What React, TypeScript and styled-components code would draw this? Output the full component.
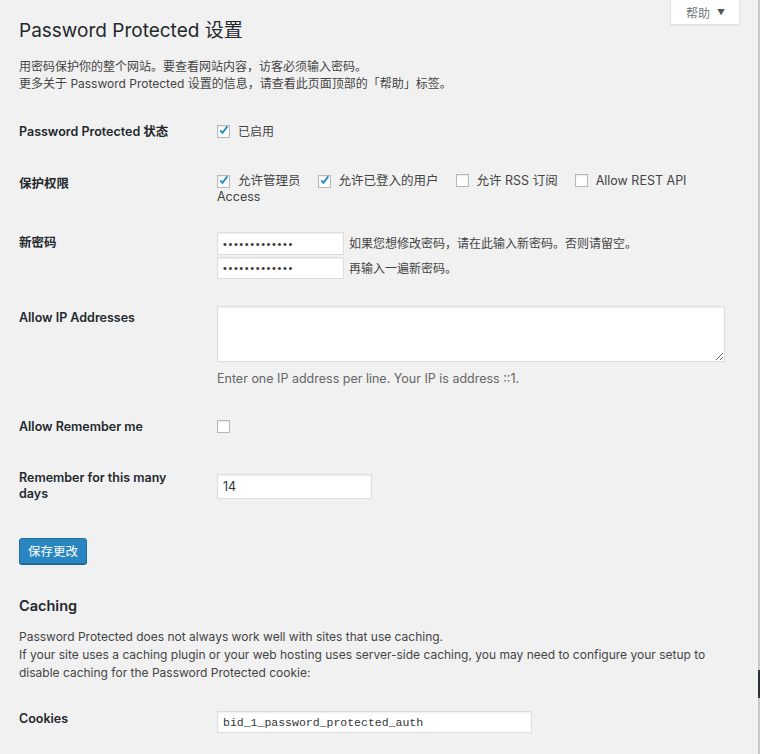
import React from 'react'
import styled, { createGlobalStyle } from 'styled-components'

const GlobalStyle = createGlobalStyle`
  html, body {
    margin: 0;
    padding: 0;
    background: #f1f1f1;
  }
  body {
    font-family: Inter, "Noto Sans CJK SC", sans-serif;
    font-size: 12px;
    color: #444;
  }
`

const Page = styled.div`
  display: flex;
  min-height: 754px;
`

const Main = styled.div`
  flex: 1;
  padding: 0 18px 0 19px;
`

const Edge = styled.div`
  width: 2px;
  background: #c9c9c9;
  display: flex;
  flex-direction: column;
`

const EdgeThumb = styled.div`
  margin-top: 670px;
  height: 28px;
  background: #2b3036;
`

const HeaderRow = styled.div`
  display: flex;
  justify-content: space-between;
  align-items: flex-start;
`

const Title = styled.h1`
  margin: 16px 0 0;
  font-size: 19px;
  line-height: 30px;
  font-weight: 400;
  color: #23282d;
`

const HelpTab = styled.button`
  height: 25px;
  padding: 0 14px 0 15px;
  display: flex;
  align-items: center;
  gap: 7px;
  background: #fff;
  border: 1px solid #e2e2e2;
  border-top: none;
  box-shadow: 0 1px 1px rgba(0, 0, 0, 0.04);
  font-family: inherit;
  font-size: 12px;
  color: #72777c;
  cursor: pointer;
`

const Caret = styled.span`
  font-size: 8px;
  color: #555;
`

const Intro = styled.p`
  margin: 12px 0 0;
  line-height: 17px;
  color: #444;
`

const FormTable = styled.div`
  margin-top: 13px;
`

const Row = styled.div<{ $pb: number }>`
  display: grid;
  grid-template-columns: 198px 1fr;
  padding: 18px 0 ${(p) => p.$pb}px;
`

const Label = styled.div<{ $lh?: number }>`
  width: 178px;
  font-size: 12.5px;
  font-weight: 600;
  line-height: ${(p) => p.$lh ?? 17}px;
  color: #23282d;
`

const Field = styled.div<{ $shift?: number }>`
  margin-top: ${(p) => p.$shift ?? 0}px;
  line-height: 17px;
`

const CheckLine = styled.label`
  display: flex;
  align-items: center;
  height: 17px;
  gap: 8px;
  color: #444;
`

const CheckWrap = styled.div`
  width: 508px;
  line-height: 16px;
  font-size: 12.5px;
`

const CheckItem = styled.label`
  margin-right: 17px;
  color: #444;
`

const Box = styled.span<{ $inline?: boolean }>`
  display: inline-flex;
  align-items: center;
  justify-content: center;
  width: 13px;
  height: 13px;
  box-sizing: border-box;
  border: 1px solid #b4b9be;
  background: #fff;
  box-shadow: inset 0 1px 2px rgba(0, 0, 0, 0.1);
  vertical-align: -2px;
  margin-right: ${(p) => (p.$inline ? 8 : 0)}px;
`

const Check = ({ on, inline }: { on?: boolean; inline?: boolean }) => (
  <Box $inline={inline}>
    {on && (
      <svg width="13" height="13" viewBox="0 0 13 13" style={{ marginTop: -2 }}>
        <path d="M2.6 6.4 L5.3 9.2 L11 1.6" fill="none" stroke="#1e8cbe" strokeWidth="2.1" />
      </svg>
    )}
  </Box>
)

const Stack = styled.div`
  display: flex;
  flex-direction: column;
  gap: 2px;
`

const InlineRow = styled.div`
  display: flex;
  align-items: center;
  gap: 5px;
`

const TextInput = styled.input<{ $w: number; $h: number; $mono?: boolean }>`
  width: ${(p) => p.$w}px;
  height: ${(p) => p.$h}px;
  box-sizing: border-box;
  margin: 0;
  padding: 0 5px;
  border: 1px solid #ddd;
  box-shadow: inset 0 1px 2px rgba(0, 0, 0, 0.07);
  background: #fff;
  color: #32373c;
  outline: none;
  font-family: ${(p) => (p.$mono ? '"Liberation Mono", monospace' : 'inherit')};
  font-size: ${(p) => (p.$mono ? 11.5 : 12.5)}px;
`

const PasswordInput = styled(TextInput)`
  font-family: "Liberation Sans", sans-serif;
  font-size: 11px;
  letter-spacing: 1.6px;
`

const Hint = styled.span`
  color: #444;
`

const TextArea = styled.textarea`
  display: block;
  width: 508px;
  height: 56px;
  box-sizing: border-box;
  margin: 0;
  border: 1px solid #ddd;
  box-shadow: inset 0 1px 2px rgba(0, 0, 0, 0.07);
  background: #fff;
  outline: none;
`

const Description = styled.p`
  margin: 8px 0 0;
  font-size: 12.5px;
  color: #666;
  line-height: 17px;
`

const SaveButton = styled.button`
  margin-top: 20px;
  height: 26px;
  padding: 0 8px 1px;
  background: #2a86c0;
  border: 1px solid #1f6fa3;
  border-radius: 3px;
  box-shadow: 0 1px 0 #1d6494;
  color: #fff;
  font-family: inherit;
  font-size: 12.5px;
  cursor: pointer;
`

const SectionTitle = styled.h2`
  margin: 32px 0 0;
  font-size: 14.5px;
  line-height: 20px;
  font-weight: 600;
  color: #23282d;
`

const SectionText = styled.p`
  margin: 12px 0 0;
  line-height: 18px;
  color: #444;
`

const CookieTable = styled.div`
  margin-top: 10px;
`

export default function App() {
  return (
    <Page>
      <GlobalStyle />
      <Main>
        <HeaderRow>
          <Title>Password Protected 设置</Title>
          <HelpTab>
            帮助 <Caret>▼</Caret>
          </HelpTab>
        </HeaderRow>
        <Intro>
          用密码保护你的整个网站。要查看网站内容，访客必须输入密码。
          <br />
          更多关于 Password Protected 设置的信息，请查看此页面顶部的「帮助」标签。
        </Intro>

        <FormTable>
          <Row $pb={17}>
            <Label>Password Protected 状态</Label>
            <Field>
              <CheckLine>
                <Check on />
                已启用
              </CheckLine>
            </Field>
          </Row>

          <Row $pb={11}>
            <Label>保护权限</Label>
            <Field $shift={-2}>
              <CheckWrap>
                <CheckItem>
                  <Check on inline />
                  允许管理员
                </CheckItem>
                <CheckItem>
                  <Check on inline />
                  允许已登入的用户
                </CheckItem>
                <CheckItem>
                  <Check inline />
                  允许 RSS 订阅
                </CheckItem>
                <CheckItem>
                  <Check inline />
                  Allow REST API Access
                </CheckItem>
              </CheckWrap>
            </Field>
          </Row>

          <Row $pb={12}>
            <Label>新密码</Label>
            <Field $shift={-2}>
              <Stack>
                <InlineRow>
                  <PasswordInput type="password" value="abcdefghijklm" readOnly $w={127} $h={23} />
                  <Hint>如果您想修改密码，请在此输入新密码。否则请留空。</Hint>
                </InlineRow>
                <InlineRow>
                  <PasswordInput type="password" value="abcdefghijklm" readOnly $w={127} $h={22} />
                  <Hint>再输入一遍新密码。</Hint>
                </InlineRow>
              </Stack>
            </Field>
          </Row>

          <Row $pb={13}>
            <Label>Allow IP Addresses</Label>
            <Field $shift={-3}>
              <TextArea />
              <Description>Enter one IP address per line. Your IP is address ::1.</Description>
            </Field>
          </Row>

          <Row $pb={17}>
            <Label>Allow Remember me</Label>
            <Field>
              <CheckLine>
                <Check />
              </CheckLine>
            </Field>
          </Row>

          <Row $pb={16}>
            <Label $lh={16}>Remember for this many days</Label>
            <Field $shift={4}>
              <TextInput type="text" value="14" readOnly $w={155} $h={25} />
            </Field>
          </Row>
        </FormTable>

        <SaveButton>保存更改</SaveButton>

        <SectionTitle>Caching</SectionTitle>
        <SectionText>
          Password Protected does not always work well with sites that use caching.
          <br />
          If your site uses a caching plugin or your web hosting uses server-side caching, you may need to configure your setup to disable caching for the Password Protected cookie:
        </SectionText>

        <CookieTable>
          <Row $pb={0}>
            <Label>Cookies</Label>
            <Field $shift={1}>
              <TextInput type="text" value="bid_1_password_protected_auth" readOnly $w={315} $h={22} $mono />
            </Field>
          </Row>
        </CookieTable>
      </Main>
      <Edge>
        <EdgeThumb />
      </Edge>
    </Page>
  )
}
